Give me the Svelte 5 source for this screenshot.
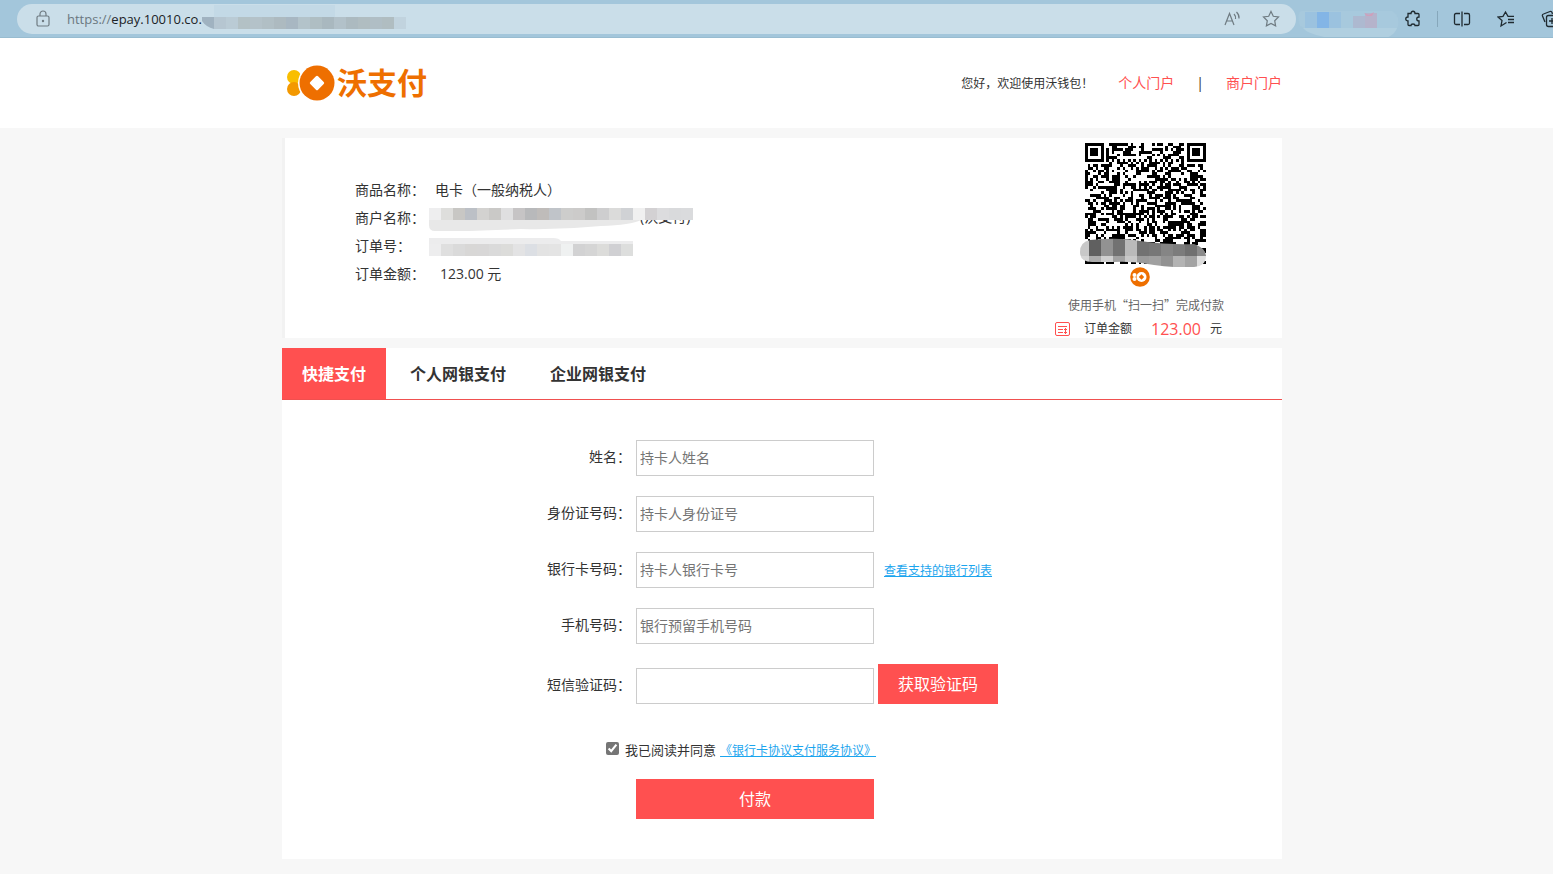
<script>
  const tabs = ['快捷支付', '个人网银支付', '企业网银支付'];
  let active = $state(0);
  let agreed = $state(true);

  const fields = [
    { id: 'name', label: '姓名：', hint: '持卡人姓名' },
    { id: 'idno', label: '身份证号码：', hint: '持卡人身份证号' },
    { id: 'card', label: '银行卡号码：', hint: '持卡人银行卡号', link: '查看支持的银行列表' },
    { id: 'phone', label: '手机号码：', hint: '银行预留手机号码' }
  ];

  // QR symbol, 45 modules a side
  const N = 45;
  function buildCode() {
    let seed = 20117;
    const next = () => (seed = (seed * 1103515245 + 12345) % 2147483648) / 2147483648;
    let d = '';
    const corner = (x, y) => {
      if (x < 8 && y < 8) return [x, y];
      if (x > N - 9 && y < 8) return [x - (N - 7), y];
      if (x < 8 && y > N - 9) return [x, y - (N - 7)];
      return null;
    };
    for (let y = 0; y < N; y++) {
      for (let x = 0; x < N; x++) {
        const r = next();
        const c = corner(x, y);
        let on = r < 0.52;
        if (c) {
          const m = Math.max(Math.abs(c[0] - 3), Math.abs(c[1] - 3));
          on = m === 3 || m < 2;
        } else if (x === 6 || y === 6) {
          on = (x + y) % 2 === 0;
        }
        if (on) d += `M${x} ${y}h1v1h-1z`;
      }
    }
    return d;
  }
  const code = buildCode();

  const urlMask = ['#b6c6d1', '#bacbd5', '#b3c1c5', '#b4c2c9', '#b1bfc5', '#adbac0', '#a8b7c2', '#b3c3ca', '#afbec3', '#a9b8bf', '#b2c1c9', '#acbac0', '#b0bdc1', '#b0bec5', '#b0bdc1'];
  const shopMask = ['#eeeeef', '#dededc', '#c8c7c4', '#bcc0c6', '#d3d2d0', '#cac9c7', '#dfdfe0', '#c6c4c5', '#b8b9bb', '#bfbcba', '#c0c4c9', '#cdcdcc', '#cccbca', '#c2c2c1', '#cececf', '#dbdbda', '#d0d2d5', '#f0f0f0', '#d3d1d3', '#dcdcde', '#d9dadc', '#dadbdd'];
  const orderMask = ['#ededee', '#dfdfdf', '#dadada', '#d8d7d6', '#d8d7d7', '#dadada', '#dcdcda', '#e3e3e4', '#dcdfe4', '#e3e3e3', '#e4e4e4', '#eff1f1', '#d2d2d3', '#d5d5d5', '#dcdcda', '#d0d0d3', '#dddedd'];
  const codeMask = ['#c8c8c8', '#606060', '#929292', '#727272', '#bababa', '#727272', '#777777', '#858585', '#7c7c7c', '#707070', '#8b8b8b'];
  const codeMaskLow = ['#d6d6d6', '#acacac', '#d0d0d0', '#a2a2a2', '#c9c9c9', '#9b9b9b', '#a0a0a0', '#929292', '#b3b3b3', '#a3a3a3', '#dddddd'];
</script>

<div class="browser">
  <div class="address">
    <svg class="lock" viewBox="0 0 16 18" width="16" height="18" aria-hidden="true">
      <rect x="2" y="6" width="12" height="10" rx="1.5" />
      <path d="M5 6V4a3 3 0 0 1 6 0v2" /><circle cx="8" cy="11" r=".6" />
    </svg>
    <span class="url"><i>https://</i>epay.10010.co.</span>
    <svg class="url-mask" viewBox="0 0 204 28" width="204" height="28" aria-hidden="true">
      <path d="M12 0h121v12H12z" fill="#c3d9e6" />
      {#each urlMask as c, i}
        <rect x={i * 12 + 12} y="12" width="12" height="12" fill={c} />
      {/each}
      <path d="M0 12h12v12q-8-2-12-8z" fill="#a0b2c0" />
      <path d="M192 12h12v12h-12z" fill="#c1d3de" />
    </svg>
    <svg class="read" viewBox="0 0 18 18" width="18" height="18" aria-label="朗读">
      <path d="M2 15 6.500 3.500 11 15M3.500 11h6M11 4q2 2 1.500 5M13.500 2q3 3 2.500 6.500" />
    </svg>
    <svg class="star" viewBox="0 0 18 18" width="18" height="18" aria-label="收藏">
      <path d="m9 1.500 2.300 4.800 5.200.7-3.800 3.700.9 5.200L9 13.400l-4.600 2.500.9-5.200L1.500 7l5.200-.7z" />
    </svg>
  </div>
  <svg class="ext-mask" viewBox="0 0 104 38" width="104" height="38" aria-hidden="true">
    <path d="M4 26Q0 12 6 11h90q8 4 6 15-4 12-20 12H42Q20 34 4 26z" fill="#a7c9dd" />
    <path d="M7 28h94q-4 11-20 11H40Q12 35 7 28z" fill="#b0cfe0" />
    <path d="M9 12h12v16H9zM33 12h12v16H33z" fill="#9bc2df" /><path d="M21 12h12v16H21z" fill="#83b5e6" />
    <path d="M57 16h12v12H57z" fill="#adb9d0" /><path d="M69 13h12v15H69z" fill="#b5b3cb" />
    <path d="m68 13 5 2 5-3-2 4h-5z" fill="#cf9fbb" />
  </svg>
  <svg class="tool" viewBox="0 0 18 18" width="18" height="18" aria-label="扩展">
    <path d="M4 3.500h3c0-3 4-3 4 0h3q1 0 1 1V7c-3 0-3 4 0 4v3.500q0 1-1 1h-3c0-2-4-2-4 0H5q-1 0-1-1V11C1 11 1 7 4 7z" />
  </svg>
  <span class="bar"></span>
  <svg class="tool" viewBox="0 0 18 18" width="18" height="18" aria-label="分屏">
    <path d="M7 3.500H3q-1.500 0-1.500 1.500v8q0 1.500 1.500 1.500h4M11 3.500h4q1.500 0 1.500 1.500v8q0 1.500-1.500 1.500h-4M9 1.500v15" />
  </svg>
  <svg class="tool" viewBox="0 0 18 18" width="18" height="18" aria-label="收藏夹">
    <path d="M9.500 12.500 4 16l1-5.500L1 7l5-.7L8.500 2 11 6.300h6M11 9.500h6M11 12.500h6" />
  </svg>
  <svg class="tool" viewBox="0 0 18 18" width="18" height="18" aria-label="集锦">
    <path d="M4 12 1.500 6q-.5-1.500 1-2L9 1.500q1.500-.5 2 1L11.500 4" /><rect x="5.500" y="5.500" width="11" height="11" rx="2" /><path d="M11 8v6M8 11h6" />
  </svg>
</div>

<header>
  <div class="wrap head">
    <div class="logo">
      <svg viewBox="0 0 49 36" width="49" height="36" aria-hidden="true">
        <circle cx="8" cy="12" r="7" fill="#f9be00" /><circle cx="8" cy="24" r="7" fill="#f39800" />
        <circle cx="31" cy="18" r="19" fill="#fff" /><circle cx="31" cy="18" r="17.500" fill="#ee6f00" />
        <rect x="25.500" y="12.500" width="11" height="11" rx="1.500" fill="#fff" transform="rotate(45 31 18)" />
      </svg>
      <strong>沃支付</strong>
    </div>
    <nav>
      <span class="hello">您好，欢迎使用沃钱包！</span>
      <a href="#personal">个人门户</a>
      <span class="pipe">|</span>
      <a href="#merchant">商户门户</a>
    </nav>
  </div>
</header>

<main>
  <section class="wrap order">
    <dl>
      <div><dt>商品名称：</dt><dd>电卡（一般纳税人）</dd></div>
      <div>
        <dt>商户名称：</dt>
        <dd class="masked">
          <svg viewBox="0 0 264 24" width="264" height="24">
            <text x="211" y="14">(沃支付)</text>
            {#each shopMask as c, i}
              <rect x={i * 12} y="0" width="12" height="12" fill={c} />
            {/each}
            <path d="M0 12h212q-10 5-40 6-40 4-80 3L40 23H6q-6 0-6-6z" fill="#e8e8e8" />
          </svg>
        </dd>
      </div>
      <div>
        <dt>订单号：</dt>
        <dd class="masked">
          <svg viewBox="0 0 264 24" width="264" height="24" aria-hidden="true">
            <path d="M0 2h124q6 0 8 3h72v4H0z" fill="#ececed" />
            {#each orderMask as c, i}
              <rect x={i * 12} y="8" width="12" height="12" fill={c} />
            {/each}
          </svg>
        </dd>
      </div>
      <div><dt>订单金额：</dt><dd class="sum">123.00 元</dd></div>
    </dl>
    <div class="scan">
      <svg class="qr" viewBox="0 0 126 124" width="126" height="124" role="img" aria-label="付款二维码">
        <g transform="translate(5 0) scale(2.68)"><path d={code} shape-rendering="crispEdges" /></g>
        <clipPath id="smear"><path d="M10 97Q40 94 60 98q30 4 54 3 12 4 12 12 0 10-12 11-20 1-40-2-20-4-40-3H12Q0 119 0 109 0 99 10 97z" /></clipPath>
        <g clip-path="url(#smear)">
          {#each codeMask as c, i}
            <rect x={i * 12 - 3} y="94" width="12" height="19" fill={c} />
            <rect x={i * 12 - 3} y="113" width="12" height="13" fill={codeMaskLow[i]} />
          {/each}
        </g>
      </svg>
      <svg class="coin" viewBox="0 0 20 20" width="20" height="20" aria-hidden="true">
        <circle cx="10" cy="10" r="9.800" fill="#ee6f00" />
        <circle cx="11.500" cy="10" r="5" fill="#fff" /><circle cx="4.500" cy="8" r="2" fill="#fff" /><circle cx="4.500" cy="12" r="2" fill="#fff" />
        <path d="m11.500 7.300 2.700 2.700-2.700 2.700L8.800 10z" fill="#ee6f00" />
      </svg>
      <p class="tip">使用手机“扫一扫”完成付款</p>
      <p class="due">
        <svg viewBox="0 0 15 15" width="15" height="15" aria-hidden="true">
          <rect x=".5" y=".5" width="14" height="13" rx="1.500" /><path d="M3 4.500h9M3 7.500h5M3 10.500h5M9 7.500h3M9 10.500h3M10.500 6v6" />
        </svg>
        <span>订单金额</span><b>123.00</b><span>元</span>
      </p>
    </div>
  </section>

  <section class="wrap pay">
    <div class="tabs" role="tablist">
      {#each tabs as t, i}
        <button role="tab" aria-selected={active === i} class:on={active === i} onclick={() => (active = i)}>{t}</button>
      {/each}
    </div>
    <form onsubmit={(e) => e.preventDefault()}>
      {#each fields as f}
        <div class="row">
          <label for={f.id}>{f.label}</label>
          <input id={f.id} type="text" placeholder={f.hint} />
          {#if f.link}<a class="more" href="#banks">{f.link}</a>{/if}
        </div>
      {/each}
      <div class="row sms">
        <label for="sms">短信验证码：</label>
        <input id="sms" type="text" />
        <button type="button" class="fill get">获取验证码</button>
      </div>
      <div class="agree">
        <input id="agree" type="checkbox" bind:checked={agreed} />
        <label for="agree">我已阅读并同意</label>
        <a href="#terms">《银行卡协议支付服务协议》</a>
      </div>
      <button class="fill submit">付款</button>
    </form>
  </section>
</main>

<style>
  :global(body) {
    background: #f7f7f7;
    color: #333;
    font: 14px/20px 'Open Sans', 'Noto Sans CJK SC', sans-serif;
    overflow-x: hidden;
  }
  * { box-sizing: border-box; }
  button, input { font: inherit; }
  p, dl, dd { margin: 0; }

  .browser {
    display: flex;
    align-items: center;
    height: 38px;
    padding-left: 17px;
    background: #a3c6db;
    border-bottom: 1px solid #98bcd0;
    overflow: hidden;
  }
  .browser svg { flex: none; }
  .address {
    flex: 1;
    min-width: 0;
    display: flex;
    align-items: center;
    height: 30px;
    padding: 0 16px 0 18px;
    border-radius: 15px;
    background: #cadee9;
  }
  .lock, .read, .star { fill: none; stroke: #6f7b82; stroke-width: 1.2; }
  .url { margin-left: 16px; font-size: 13px; color: #1b2226; }
  .url i { font-style: normal; color: #6b7880; }
  .url-mask { margin-right: auto; }
  .read { margin-right: 21px; }
  .ext-mask { margin-right: 4px; }
  .tool { margin-right: 26px; fill: none; stroke: #1f2a30; stroke-width: 1.3; }
  .tool:last-child { margin-right: -6px; }
  .ext-mask + .tool { margin-right: 15px; }
  .bar { flex: none; width: 1px; height: 16px; margin-right: 15px; background: #86a7bb; }

  header { background: #fff; }
  header, main { padding-left: 11px; }
  .wrap { max-width: 1000px; margin: 0 auto; }
  .head {
    display: flex;
    align-items: center;
    justify-content: space-between;
    height: 90px;
    padding-left: 4px;
  }
  .logo { display: flex; align-items: center; gap: 2px; color: #ee6f00; }
  .logo strong { font-size: 30px; line-height: 36px; }
  nav { display: flex; align-items: baseline; }
  nav a { color: #ff5050; text-decoration: none; }
  .hello { margin-right: 25px; font-size: 12px; }
  .pipe { margin: 0 22px; }

  .order {
    display: flex;
    justify-content: space-between;
    height: 200px;
    margin-top: 10px;
    border-left: 3px solid #f2f2f2;
    background: #fff;
  }
  dl { padding: 38px 0 0 70px; }
  dl div { display: flex; height: 28px; align-items: center; }
  dt { width: 80px; }
  .masked { height: 28px; margin-left: -6px; padding-top: 4px; }
  .masked text { fill: #333; }
  .sum { padding-left: 5px; }
  svg { display: block; }
  .scan { width: 230px; padding-top: 5px; }
  .qr { margin-left: 28px; }
  .coin { margin-left: 78px; }
  .tip { margin: 8px 0 4px 16px; font-family: 'Noto Sans CJK SC', sans-serif; font-size: 12px; color: #666; }
  .due { display: flex; align-items: center; padding-left: 3px; font-size: 12px; }
  .due svg { margin-right: 14px; fill: none; stroke: #ff5050; }
  .due b { margin: 0 9px 0 19px; font-size: 16px; font-weight: 400; color: #ff5050; }

  .pay { margin-top: 10px; background: #fff; }
  .tabs { display: flex; gap: 4px; height: 52px; border-bottom: 1px solid #f0504f; }
  .tabs button {
    padding: 0 20px;
    border: 0;
    background: none;
    color: #333;
    font-size: 16px;
    font-weight: 700;
    cursor: pointer;
  }
  .tabs .on { background: #ff5050; color: #fff; }
  form { padding: 40px 0; }
  .row { display: flex; align-items: center; height: 36px; margin-bottom: 20px; }
  .row label { width: 354px; padding: 0 5px 2px 0; text-align: right; }
  .row input {
    width: 238px;
    height: 36px;
    padding: 0 3px 2px;
    border: 1px solid #ccc;
    border-radius: 0;
    background: #fff;
    color: #333;
  }
  .row input::placeholder { color: #757575; }
  .more, .agree a { color: #1ba5ee; font-size: 12px; }
  .more { margin-left: 10px; padding-top: 2px; }
  .sms { height: 40px; align-items: flex-end; }
  .sms label { line-height: 34px; }
  .fill { border: 0; background: #ff5050; color: #fff; font-size: 16px; cursor: pointer; }
  .get { width: 120px; height: 40px; margin-left: 4px; }
  .agree { display: flex; align-items: baseline; height: 20px; margin: 36px 0 19px 324px; font-size: 13px; }
  .agree input { width: 13px; height: 13px; margin: 0 6px 0 0; accent-color: #757575; }
  .agree a { margin-left: 4px; }
  .submit { display: block; width: 238px; height: 40px; margin-left: 354px; }
</style>
